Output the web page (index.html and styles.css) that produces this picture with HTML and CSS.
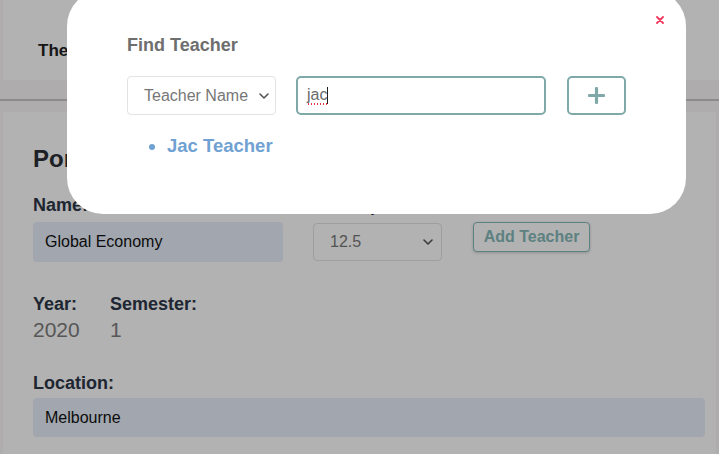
FILE: index.html
```html
<!DOCTYPE html>
<html>
<head>
<meta charset="utf-8">
<link rel="stylesheet" href="styles.css">
</head>
<body>
<div class="page">
  <header class="topbar"><span class="brand">The Portal</span></header>
  <div class="divider"></div>
  <main class="card">
    <h1 class="title">Portfolio</h1>
    <div class="row">
      <div class="col col-name">
        <div class="label">Name:</div>
        <div class="field">Global Economy</div>
      </div>
      <div class="col col-points">
        <div class="label">Credit points:</div>
        <div class="select small">
          <span class="select-text">12.5</span>
          <svg class="chev" width="10" height="6" viewBox="0 0 10 6"><path d="M1 1l4 4 4-4" fill="none" stroke="#555" stroke-width="1.6" stroke-linecap="round" stroke-linejoin="round"/></svg>
        </div>
      </div>
      <div class="col col-btn">
        <button class="add-btn">Add Teacher</button>
      </div>
    </div>
    <div class="row meta">
      <div class="meta-item">
        <div class="label">Year:</div>
        <div class="value">2020</div>
      </div>
      <div class="meta-item">
        <div class="label">Semester:</div>
        <div class="value">1</div>
      </div>
    </div>
    <div class="label loc-label">Location:</div>
    <div class="field wide">Melbourne</div>
  </main>
</div>

<div class="overlay"></div>

<div class="modal">
  <button class="close" aria-label="close">
    <svg width="8" height="8" viewBox="0 0 8 8"><path d="M1 1l6 6M7 1l-6 6" stroke="#f0385c" stroke-width="1.8" stroke-linecap="round"/></svg>
  </button>
  <h2 class="modal-title">Find Teacher</h2>
  <div class="search-row">
    <div class="select filter">
      <span class="select-text">Teacher Name</span>
      <svg class="chev" width="10" height="6" viewBox="0 0 10 6"><path d="M1 1l4 4 4-4" fill="none" stroke="#555" stroke-width="1.6" stroke-linecap="round" stroke-linejoin="round"/></svg>
    </div>
    <div class="search-input"><span class="typed">jac</span><span class="caret"></span></div>
    <button class="plus-btn" aria-label="add">
      <svg width="17" height="17" viewBox="0 0 17 17"><path d="M8.5 1.5v14M1.5 8.5h14" stroke="#7fa9a8" stroke-width="3.2" stroke-linecap="round"/></svg>
    </button>
  </div>
  <ul class="results">
    <li>Jac Teacher</li>
  </ul>
</div>
</body>
</html>
```

FILE: styles.css
```css
* { box-sizing: border-box; }
html, body { margin: 0; padding: 0; }
body {
  background: #fbf6f9;
  font-family: "Liberation Sans", Arial, sans-serif;
  color: #2d3748;
  width: 719px;
  height: 454px;
  overflow: hidden;
}
.page { padding: 0 3px; }
.topbar {
  height: 80px;
  background: #fff;
  display: flex;
  align-items: center;
  padding: 22px 0 0 35px;
  margin: 0 -3px 0 0;
}
.brand { font-size: 17px; font-weight: 700; line-height: 20px; color: #222; }
.divider {
  height: 2px;
  background: #cbc6c8;
  margin: 19px -3px 0 -3px;
}
.card {
  background: #fff;
  margin-top: 11px;
  padding: 33px 11px 0 30px;
  height: 342px;
  overflow: hidden;
}
.title {
  margin: 0;
  font-size: 24px;
  line-height: 28px;
  font-weight: 700;
  color: #2a2f36;
}
.row { display: flex; }
.col { display: flex; flex-direction: column; }
.col-name { width: 250px; margin-top: 21px; }
.col-points { width: 129px; margin-left: 30px; margin-top: 21px; }
.col-btn { margin-left: 31px; margin-top: 21px; padding-top: 28px; }
.label {
  font-size: 18px;
  line-height: 22px;
  font-weight: 700;
  color: #2d3748;
}
.col .label { margin-bottom: 6px; }
.field {
  height: 40px;
  background: #e8eefa;
  border-radius: 4px;
  padding: 0 12px;
  display: flex;
  align-items: center;
  font-size: 16px;
  color: #111;
}
.select {
  display: flex;
  align-items: center;
  justify-content: space-between;
  background: #fff;
  border: 1px solid #e3e3e3;
  border-radius: 4px;
  color: #777;
  font-size: 16px;
}
.select.small { height: 38px; margin-top: 1px; padding: 0 8px 0 16px; }
.chev { display: block; }
.add-btn {
  height: 30px;
  width: 117px;
  padding: 0;
  background: #fff;
  border: 1px solid #86b9b8;
  border-radius: 4px;
  font-family: inherit;
  font-size: 16px;
  font-weight: 700;
  color: #86b9b8;
  box-shadow: 0 1px 3px rgba(0,0,0,0.2);
}
.meta { margin-top: 31px; }
.meta-item { display: flex; flex-direction: column; }
.meta-item:first-child { width: 77px; }
.value {
  margin-top: 3px;
  font-size: 21px;
  line-height: 24px;
  color: #7d7d7d;
}
.loc-label { margin-top: 30px; margin-bottom: 4px; }
.field.wide { width: 672px; height: 39px; }

.overlay {
  position: fixed;
  inset: 0;
  background: rgba(0, 0, 0, 0.3);
}
.modal {
  position: fixed;
  left: 67px;
  top: -10px;
  width: 619px;
  height: 224px;
  background: #fff;
  border-radius: 36px;
  padding: 44px 0 0 60px;
}
.close {
  position: absolute;
  top: 26px;
  right: 22px;
  width: 8px;
  height: 8px;
  padding: 0;
  border: 0;
  background: none;
  display: flex;
}
.modal-title {
  margin: 0;
  font-size: 18px;
  line-height: 22px;
  font-weight: 700;
  color: #6e6e6e;
}
.search-row {
  display: flex;
  margin-top: 20px;
  height: 39px;
}
.select.filter { width: 149px; padding: 0 6px 0 16px; color: #777; }
.search-input {
  width: 250px;
  margin-left: 20px;
  border: 2px solid #7fa9a8;
  border-radius: 5px;
  padding: 0 9px;
  display: flex;
  align-items: center;
  font-size: 16px;
  color: #6b6b6b;
}
.typed {
  background-image: radial-gradient(circle, #e8333f 0.9px, transparent 1.1px);
  background-size: 3px 2px;
  background-repeat: repeat-x;
  background-position: 0 100%;
  padding-bottom: 1px;
}
.caret {
  width: 1px;
  height: 17px;
  background: #222;
}
.plus-btn {
  width: 59px;
  margin-left: 21px;
  border: 2px solid #7fa9a8;
  border-radius: 5px;
  background: #fff;
  display: flex;
  align-items: center;
  justify-content: center;
  padding: 0;
}
.results {
  margin: 20px 0 0;
  padding-left: 40px;
  font-size: 18.5px;
  line-height: 22px;
  font-weight: 700;
  color: #6fa1d2;
}
```
